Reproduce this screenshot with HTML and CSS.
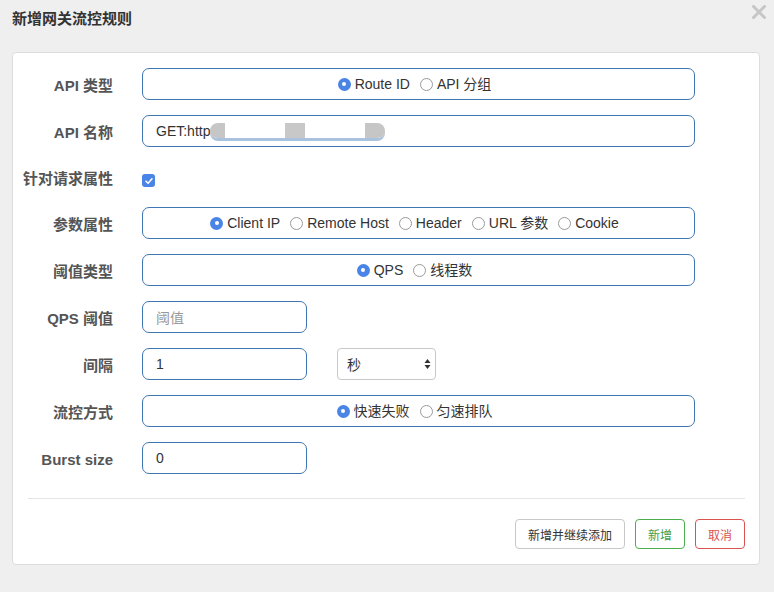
FILE: index.html
```html
<!DOCTYPE html>
<html>
<head>
<meta charset="utf-8">
<link rel="stylesheet" href="styles.css">
</head>
<body>
<div class="dialog">
  <div class="header">
    <div class="title">新增网关流控规则</div>
    <svg class="close" width="14" height="14" viewBox="0 0 14 14"><path d="M1.5 1.5 L12.5 12.5 M12.5 1.5 L1.5 12.5" stroke="#c6c6c6" stroke-width="3" stroke-linecap="square"/></svg>
  </div>
  <div class="panel">
    <div class="form">
      <div class="row">
        <div class="label">API 类型</div>
        <div class="box radios">
          <span class="opt"><span class="radio on"></span>Route ID</span>
          <span class="opt"><span class="radio"></span>API 分组</span>
        </div>
      </div>
      <div class="row">
        <div class="label">API 名称</div>
        <div class="box text">GET:http<span class="redact"><span class="cap-l"></span><span class="gap"></span><span class="blk"></span><span class="gap"></span><span class="cap-r"></span></span></div>
      </div>
      <div class="row short">
        <div class="label">针对请求属性</div>
        <div class="check-wrap"><span class="check"><svg width="12" height="12" viewBox="0 0 12 12"><path d="M3 6.2 L5.1 8.3 L9 3.8" fill="none" stroke="#fff" stroke-width="1.6" stroke-linecap="round" stroke-linejoin="round"/></svg></span></div>
      </div>
      <div class="row">
        <div class="label">参数属性</div>
        <div class="box radios">
          <span class="opt"><span class="radio on"></span>Client IP</span>
          <span class="opt"><span class="radio"></span>Remote Host</span>
          <span class="opt"><span class="radio"></span>Header</span>
          <span class="opt"><span class="radio"></span>URL 参数</span>
          <span class="opt"><span class="radio"></span>Cookie</span>
        </div>
      </div>
      <div class="row">
        <div class="label">阈值类型</div>
        <div class="box radios">
          <span class="opt"><span class="radio on"></span>QPS</span>
          <span class="opt"><span class="radio"></span>线程数</span>
        </div>
      </div>
      <div class="row">
        <div class="label">QPS 阈值</div>
        <div class="box text small placeholder">阈值</div>
      </div>
      <div class="row">
        <div class="label">间隔</div>
        <div class="inline">
          <div class="box text small">1</div>
          <div class="select">秒<svg width="7" height="12" viewBox="0 0 7 12"><path d="M3.5 1 L6.5 5 L0.5 5 Z M0.5 7 L6.5 7 L3.5 11 Z" fill="#333"/></svg></div>
        </div>
      </div>
      <div class="row">
        <div class="label">流控方式</div>
        <div class="box radios">
          <span class="opt"><span class="radio on"></span>快速失败</span>
          <span class="opt"><span class="radio"></span>匀速排队</span>
        </div>
      </div>
      <div class="row">
        <div class="label">Burst size</div>
        <div class="box text small">0</div>
      </div>
    </div>
    <div class="divider"></div>
    <div class="footer">
      <button class="btn">新增并继续添加</button>
      <button class="btn ok">新增</button>
      <button class="btn cancel">取消</button>
    </div>
  </div>
</div>
</body>
</html>
```
FILE: styles.css
```css
html, body {
  margin: 0;
  padding: 0;
  background: #efefef;
}
body {
  font-family: "Liberation Sans", "Noto Sans CJK SC", sans-serif;
  color: #333;
  width: 774px;
  height: 592px;
  overflow: hidden;
}
.header {
  display: flex;
  justify-content: space-between;
  align-items: flex-start;
  height: 52px;
  padding: 0 8px 0 12px;
  box-sizing: border-box;
}
.title {
  font-size: 15px;
  font-weight: bold;
  line-height: 18px;
  margin-top: 10px;
  color: #333;
}
.close {
  margin-top: 5px;
}
.panel {
  margin: 0 14px 0 12px;
  background: #fff;
  border: 1px solid #dcdcdc;
  border-radius: 4px;
  padding: 15px 0 15px 0;
}
.form {
  display: flex;
  flex-direction: column;
  gap: 15px;
}
.row {
  display: grid;
  grid-template-columns: 100px 553px;
  column-gap: 29px;
  align-items: center;
  height: 32px;
}
.row.short {
  height: 30px;
}
.label {
  text-align: right;
  font-size: 15px;
  font-weight: bold;
  color: #555;
  line-height: 18px;
  padding-top: 3px;
  white-space: nowrap;
}
.box {
  height: 32px;
  box-sizing: border-box;
  border: 1px solid #3f77b2;
  border-radius: 7px;
  font-size: 14px;
  display: flex;
  align-items: center;
}
.radios {
  justify-content: center;
  gap: 10px;
  padding-left: 0;
  padding-right: 8px;
}
.opt {
  display: inline-flex;
  align-items: center;
  gap: 4px;
  color: #333;
  line-height: 16px;
}
.radio {
  width: 13px;
  height: 13px;
  box-sizing: border-box;
  border-radius: 50%;
  border: 1px solid #9a9a9a;
  background: #fff;
  display: inline-flex;
  align-items: center;
  justify-content: center;
}
.radio.on {
  border: none;
  background: #4a84e6;
}
.radio.on::after {
  content: "";
  width: 4px;
  height: 4px;
  border-radius: 50%;
  background: #fff;
}
.text {
  padding-left: 13px;
  color: #333;
}
.small {
  width: 165px;
}
.placeholder {
  color: #9a9a9a;
}
.redact {
  display: inline-flex;
  height: 18px;
  margin-top: 1px;
  border-bottom: 3px solid #a9c3df;
  box-sizing: border-box;
  border-radius: 0 0 8px 8px;
  overflow: hidden;
}
.redact span {
  display: block;
  height: 15px;
}
.cap-l {
  width: 15px;
  background: #c6c6c6;
  border-radius: 8px 0 0 0;
}
.gap {
  width: 60px;
  background: #fff;
}
.blk {
  width: 20px;
  background: #c8c8c8;
}
.cap-r {
  width: 20px;
  background: #c6c6c6;
  border-radius: 0 8px 0 0;
}
.check-wrap {
  display: flex;
  align-items: flex-start;
  height: 30px;
  padding-top: 12px;
  box-sizing: border-box;
}
.check {
  width: 13px;
  height: 13px;
  border-radius: 3px;
  background: #4a84e6;
  display: inline-flex;
  align-items: center;
  justify-content: center;
}
.inline {
  display: flex;
  align-items: center;
  gap: 30px;
}
.select {
  width: 99px;
  height: 32px;
  box-sizing: border-box;
  border: 1px solid #c9c9c9;
  border-radius: 4px;
  display: flex;
  align-items: center;
  justify-content: space-between;
  padding: 0 4px 0 9px;
  font-size: 14px;
  color: #333;
}
.divider {
  height: 1px;
  background: #e4e4e4;
  margin: 24px 14px 20px 15px;
}
.footer {
  display: flex;
  justify-content: flex-end;
  gap: 10px;
  padding-right: 14px;
}
.btn {
  height: 30px;
  padding: 0 12px;
  font-family: "Liberation Sans", "Noto Sans CJK SC", sans-serif;
  font-size: 12px;
  background: #fff;
  border: 1px solid #c8c8c8;
  border-radius: 4px;
  color: #333;
}
.btn.ok {
  border-color: #4cae4c;
  color: #449d44;
}
.btn.cancel {
  border-color: #d9534f;
  color: #d9534f;
}
```
